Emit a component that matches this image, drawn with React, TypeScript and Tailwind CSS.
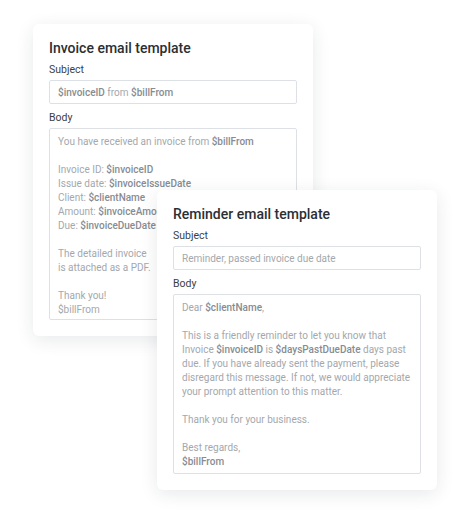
const font = { fontFamily: 'Roboto, "Noto Sans", sans-serif' }

function B({ children }: { children: React.ReactNode }) {
  return <span className="font-medium text-[#878c93]">{children}</span>
}

function Card({
  title,
  subject,
  body,
  className,
}: {
  title: string
  subject: React.ReactNode
  body: React.ReactNode
  className?: string
}) {
  return (
    <div
      className={`w-[280px] rounded-md bg-white px-4 pt-[15px] pb-4 shadow-[0_4px_18px_rgba(30,41,59,0.10)] ${className ?? ''}`}
    >
      <h2 className="text-[14px] leading-[18px] font-medium text-[#2b2f33]">{title}</h2>
      <div className="mt-[6px] text-[10.5px] leading-[13px] text-[#3a3f44]">Subject</div>
      <div className="mt-[4px] flex h-[24px] items-center rounded-[2px] border border-[#dde1e6] px-[8px] text-[10px] text-[#a4a8ad]">
        {subject}
      </div>
      <div className="mt-[7px] text-[10.5px] leading-[13px] text-[#3a3f44]">Body</div>
      <div className="mt-[4px] rounded-[2px] border border-[#dde1e6] px-[8px] pt-[6px] pb-[4px] text-[10px] leading-[14px] text-[#a4a8ad]">
        {body}
      </div>
    </div>
  )
}

export default function App() {
  return (
    <div className="h-[515px] w-[470px] bg-white" style={font}>
      <div className="relative h-full w-full">
        <Card
          className="absolute top-[24px] left-[33px]"
          title="Invoice email template"
          subject={
            <span>
              <B>$invoiceID</B> from <B>$billFrom</B>
            </span>
          }
          body={
            <div className="h-[180px]">
              <p>
                You have received an invoice from <B>$billFrom</B>
              </p>
              <p className="mt-[14px]">
                Invoice ID: <B>$invoiceID</B>
              </p>
              <p>
                Issue date: <B>$invoiceIssueDate</B>
              </p>
              <p>
                Client: <B>$clientName</B>
              </p>
              <p>
                Amount: <B>$invoiceAmount</B>
              </p>
              <p>
                Due: <B>$invoiceDueDate</B>
              </p>
              <p className="mt-[14px]">The detailed invoice</p>
              <p>is attached as a PDF.</p>
              <p className="mt-[14px]">Thank you!</p>
              <p>$billFrom</p>
            </div>
          }
        />
        <Card
          className="absolute top-[190px] left-[157px]"
          title="Reminder email template"
          subject="Reminder, passed invoice due date"
          body={
            <div className="h-[168px]">
              <p>
                Dear <B>$clientName</B>,
              </p>
              <p className="mt-[14px]">
                This is a friendly reminder to let you know that Invoice <B>$invoiceID</B> is{' '}
                <B>$daysPastDueDate</B> days past due. If you have already sent the payment, please
                disregard this message. If not, we would appreciate your prompt attention to this
                matter.
              </p>
              <p className="mt-[14px]">Thank you for your business.</p>
              <p className="mt-[14px]">Best regards,</p>
              <p>
                <B>$billFrom</B>
              </p>
            </div>
          }
        />
      </div>
    </div>
  )
}
